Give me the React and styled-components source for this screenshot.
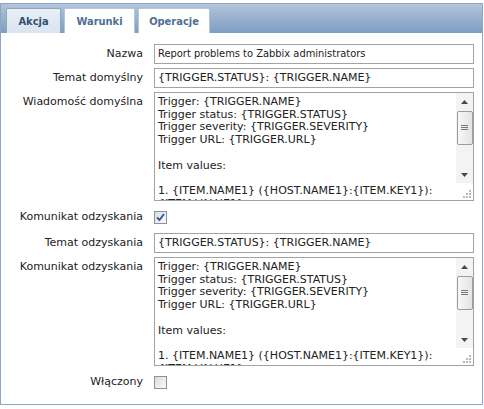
import React from 'react';
import styled, { createGlobalStyle } from 'styled-components';

const GlobalStyle = createGlobalStyle`
  body {
    margin: 0;
    background: #fff;
    font-family: "DejaVu Sans", "Liberation Sans", sans-serif;
    font-size: 11px;
    color: #222;
  }
`;

const narrow = '"DejaVu Sans Condensed", "DejaVu Sans", "Liberation Sans", sans-serif';

const Frame = styled.div`
  box-sizing: border-box;
  width: 483px;
  margin-top: 3px;
  border: 1px solid #8fa6c1;
  background: #fff;
`;

const TabBar = styled.div`
  display: flex;
  gap: 3px;
  height: 29px;
  box-sizing: border-box;
  padding: 4px 0 0 5px;
  background: linear-gradient(to bottom, #b2c5da, #7d9dc2);
`;

const Tab = styled.div`
  box-sizing: border-box;
  width: ${p => p.$w}px;
  height: 25px;
  display: flex;
  align-items: center;
  justify-content: center;
  font-family: ${narrow};
  font-weight: bold;
  font-size: 11px;
  border: 1px solid ${p => (p.$active ? '#8ea5bf' : '#b5c6d9')};
  border-bottom: none;
  border-radius: 2px 2px 0 0;
  color: ${p => (p.$active ? '#33506f' : '#4f6f94')};
  background: ${p => (p.$active ? 'linear-gradient(to bottom, #e9eff5, #d9e4ef)' : '#fff')};
`;

const Form = styled.div`
  display: grid;
  grid-template-columns: 142px 320px;
  column-gap: 11px;
  row-gap: 4px;
  padding: 11px 0 10px 0;
`;

const Label = styled.div`
  text-align: right;
  line-height: ${p => (p.$tall ? 24 : 20)}px;
  align-self: start;
  white-space: nowrap;
  color: #222;
`;

const Input = styled.div`
  box-sizing: border-box;
  height: 20px;
  border: 1px solid #a3a3a3;
  padding: 0 3px;
  line-height: 18px;
  white-space: nowrap;
  overflow: hidden;
  color: #222;
  font-family: ${p => (p.$narrow ? narrow : 'inherit')};
`;

const Area = styled.div`
  box-sizing: border-box;
  height: 109px;
  border: 1px solid #a3a3a3;
  display: flex;
  overflow: hidden;
`;

const AreaText = styled.div`
  flex: 1;
  padding: 3px 3px 0;
  line-height: 12.7px;
  white-space: pre-wrap;
  overflow: hidden;
  color: #222;
`;

const Side = styled.div`
  width: 17px;
  display: flex;
  flex-direction: column;
`;

const Track = styled.div`
  height: 90px;
  background: #f3f3f3;
  display: flex;
  flex-direction: column;
  align-items: center;
`;

const Arrow = styled.div`
  width: 17px;
  height: 17px;
  display: flex;
  align-items: center;
  justify-content: center;
`;

const Thumb = styled.div`
  box-sizing: border-box;
  width: 16px;
  height: 34px;
  margin-top: 1px;
  border: 1px solid #9c9c9c;
  border-radius: 2px;
  background: linear-gradient(to right, #f7f7f7, #e4e4e4);
  display: flex;
  align-items: center;
  justify-content: center;
`;

const Spacer = styled.div`
  flex: 1;
`;

const Grip = styled.div`
  flex: 1;
  display: flex;
  align-items: flex-end;
  justify-content: flex-end;
  padding: 0 2px 2px 0;
  background: #fff;
`;

const CheckRow = styled.div`
  height: 24px;
  display: flex;
  align-items: center;
  padding-top: 1px;
  box-sizing: border-box;
`;

const Box = styled.div`
  box-sizing: border-box;
  width: 13px;
  height: 13px;
  border: 1px solid #8e9296;
  background: linear-gradient(135deg, #dcdcdc, #fafafa);
  display: flex;
  align-items: center;
  justify-content: center;
`;

const message = `Trigger: {TRIGGER.NAME}
Trigger status: {TRIGGER.STATUS}
Trigger severity: {TRIGGER.SEVERITY}
Trigger URL: {TRIGGER.URL}

Item values:

1. {ITEM.NAME1} ({HOST.NAME1}:{ITEM.KEY1}):
{ITEM.VALUE1}`;

const Up = () => (
  <svg width="7" height="4" viewBox="0 0 7 4"><path d="M3.5 0 L7 4 L0 4 Z" fill="#4a4a4a" /></svg>
);
const Down = () => (
  <svg width="7" height="4" viewBox="0 0 7 4"><path d="M0 0 L7 0 L3.5 4 Z" fill="#4a4a4a" /></svg>
);

const TextArea = ({ text }) => (
  <Area>
    <AreaText>{text}</AreaText>
    <Side>
      <Track>
        <Arrow><Up /></Arrow>
        <Thumb>
          <svg width="7" height="6" viewBox="0 0 7 6">
            <path d="M0 0.5h7M0 2.5h7M0 4.5h7" stroke="#777" strokeWidth="1" />
          </svg>
        </Thumb>
        <Spacer />
        <Arrow><Down /></Arrow>
      </Track>
      <Grip>
        <svg width="8" height="8" viewBox="0 0 8 8" fill="#b8b8b8">
          <rect x="6" y="0" width="2" height="2" />
          <rect x="3" y="3" width="2" height="2" />
          <rect x="6" y="3" width="2" height="2" />
          <rect x="0" y="6" width="2" height="2" />
          <rect x="3" y="6" width="2" height="2" />
          <rect x="6" y="6" width="2" height="2" />
        </svg>
      </Grip>
    </Side>
  </Area>
);

const Checkbox = ({ checked }) => (
  <CheckRow>
    <Box>
      {checked && (
        <svg width="9" height="9" viewBox="0 0 9 9">
          <path d="M1 4.5 L3.5 7 L8 1" stroke="#2b4fb0" strokeWidth="1.8" fill="none" />
        </svg>
      )}
    </Box>
  </CheckRow>
);

export default function App() {
  return (
    <>
      <GlobalStyle />
      <Frame>
        <TabBar>
          <Tab $active $w={55}>Akcja</Tab>
          <Tab $w={71}>Warunki</Tab>
          <Tab $w={72}>Operacje</Tab>
        </TabBar>
        <Form>
          <Label>Nazwa</Label>
          <Input $narrow>Report problems to Zabbix administrators</Input>

          <Label>Temat domyślny</Label>
          <Input>{'{TRIGGER.STATUS}: {TRIGGER.NAME}'}</Input>

          <Label>Wiadomość domyślna</Label>
          <TextArea text={message} />

          <Label $tall>Komunikat odzyskania</Label>
          <Checkbox checked />

          <Label>Temat odzyskania</Label>
          <Input>{'{TRIGGER.STATUS}: {TRIGGER.NAME}'}</Input>

          <Label>Komunikat odzyskania</Label>
          <TextArea text={message} />

          <Label $tall>Włączony</Label>
          <Checkbox />
        </Form>
      </Frame>
    </>
  );
}
